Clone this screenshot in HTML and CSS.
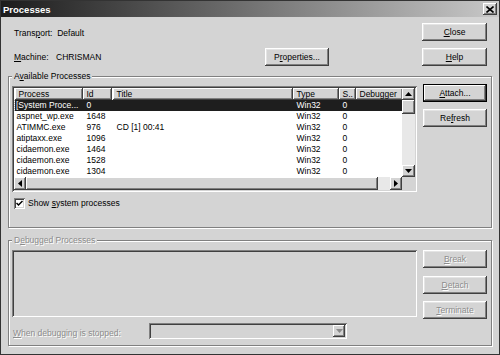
FILE: index.html
```html
<!DOCTYPE html>
<html>
<head>
    <title>Processes</title>
    <link rel="stylesheet" href="styles.css">
</head>
<body>
    <div class="window">
        <div class="titlebar">
            <span class="title">Processes</span>
            <span class="title-close">
                <svg width="8" height="7" viewBox="0 0 8 7"><path d="M0.5 0.5 L7.5 6.5 M7.5 0.5 L0.5 6.5" stroke="#000" stroke-width="1.6"/></svg>
            </span>
        </div>

        <div class="content">
            <div class="top">
                <div class="info">
                    <div class="info-row transport">Trans<u>p</u>ort:&nbsp; Default</div>
                    <div class="info-row machine">
                        <span class="lbl"><u>M</u>achine:</span>
                        <span class="val">CHRISMAN</span>
                        <button class="btn btn-props">P<u>r</u>operties...</button>
                    </div>
                </div>
                <div class="btn-col">
                    <button class="btn"><u>C</u>lose</button>
                    <button class="btn"><u>H</u>elp</button>
                </div>
            </div>

            <fieldset class="group">
                <legend>A<u>v</u>ailable Processes</legend>
                <div class="group-body">
                    <div class="listview">
                        <div class="list-grid">
                            <div class="list-table">
                                <table>
                                    <colgroup>
                                        <col style="width:68px">
                                        <col style="width:30px">
                                        <col style="width:180px">
                                        <col style="width:46px">
                                        <col style="width:17px">
                                        <col style="width:47px">
                                    </colgroup>
                                    <thead>
                                        <tr>
                                            <th>Process</th>
                                            <th>Id</th>
                                            <th>Title</th>
                                            <th>Type</th>
                                            <th>S..</th>
                                            <th>Debugger</th>
                                        </tr>
                                    </thead>
                                    <tbody>
                                        <tr class="selected">
                                            <td class="focus">[System Proce...</td>
                                            <td>0</td><td></td><td>Win32</td><td>0</td><td></td>
                                        </tr>
                                        <tr><td>aspnet_wp.exe</td><td>1648</td><td></td><td>Win32</td><td>0</td><td></td></tr>
                                        <tr><td>ATIMMC.exe</td><td>976</td><td>CD [1] 00:41</td><td>Win32</td><td>0</td><td></td></tr>
                                        <tr><td>atiptaxx.exe</td><td>1096</td><td></td><td>Win32</td><td>0</td><td></td></tr>
                                        <tr><td>cidaemon.exe</td><td>1464</td><td></td><td>Win32</td><td>0</td><td></td></tr>
                                        <tr><td>cidaemon.exe</td><td>1528</td><td></td><td>Win32</td><td>0</td><td></td></tr>
                                        <tr><td>cidaemon.exe</td><td>1304</td><td></td><td>Win32</td><td>0</td><td></td></tr>
                                    </tbody>
                                </table>
                            </div>

                            <div class="vscroll">
                                <span class="sb-btn"><svg width="7" height="4" viewBox="0 0 7 4"><polygon points="3.5,0 7,4 0,4" fill="#000"/></svg></span>
                                <span class="sb-thumb"></span>
                                <span class="sb-track"></span>
                                <span class="sb-btn"><svg width="7" height="4" viewBox="0 0 7 4"><polygon points="0,0 7,0 3.5,4" fill="#000"/></svg></span>
                            </div>

                            <div class="hscroll">
                                <span class="sb-btn"><svg width="4" height="7" viewBox="0 0 4 7"><polygon points="0,3.5 4,0 4,7" fill="#000"/></svg></span>
                                <span class="sb-thumb"></span>
                                <span class="sb-track"></span>
                                <span class="sb-btn"><svg width="4" height="7" viewBox="0 0 4 7"><polygon points="0,0 4,3.5 0,7" fill="#000"/></svg></span>
                            </div>

                            <div class="corner"></div>
                        </div>
                    </div>

                    <div class="btn-col">
                        <button class="btn btn-default"><u>A</u>ttach...</button>
                        <button class="btn">Re<u>f</u>resh</button>
                    </div>
                </div>

                <label class="check">
                    <span class="check-box">
                        <svg width="7" height="7" viewBox="0 0 7 7"><path d="M0.5 3 L2.5 5 L6.5 1" fill="none" stroke="#000" stroke-width="1.5"/></svg>
                    </span>
                    <span>Show <u>s</u>ystem processes</span>
                </label>
            </fieldset>

            <fieldset class="group disabled">
                <legend>D<u>e</u>bugged Processes</legend>
                <div class="group-body debugged">
                    <div class="empty-list"></div>
                    <div class="btn-col">
                        <button class="btn" disabled><u>B</u>reak</button>
                        <button class="btn" disabled><u>D</u>etach</button>
                        <button class="btn" disabled><u>T</u>erminate</button>
                    </div>
                    <div class="stop-row">
                        <span class="stop-lbl"><u>W</u>hen debugging is stopped:</span>
                        <span class="combo">
                            <span class="combo-btn"><svg width="7" height="4" viewBox="0 0 7 4"><polygon points="0,0 7,0 3.5,4" fill="#8a8a8a"/></svg></span>
                        </span>
                    </div>
                </div>
            </fieldset>
        </div>
    </div>
</body>
</html>
```

FILE: styles.css
```css
body {
    margin: 0;
    background: #d4d4d4;
}

.window {
    width: 500px;
    height: 355px;
    box-sizing: border-box;
    border: 1px solid #333;
    background: #d4d4d4;
    font: 8.5px "Liberation Sans", Arial, sans-serif;
    color: #000;
    overflow: hidden;
}

.titlebar {
    height: 16px;
    display: flex;
    align-items: center;
    justify-content: space-between;
    padding: 0 2px 0 2px;
    background: linear-gradient(to right, #1c1c1c, #c8c8c8);
}

.title {
    color: #fff;
    font-weight: bold;
    font-size: 9.5px;
}

.title-close {
    width: 14px;
    height: 12px;
    box-sizing: border-box;
    display: flex;
    align-items: center;
    justify-content: center;
    background: #d4d4d4;
    box-shadow: inset -1px -1px 0 #404040, inset 1px 1px 0 #fff, inset -2px -2px 0 #808080;
}

.content {
    padding: 6px 7px 0 7px;
}

/* top area */
.top {
    display: grid;
    grid-template-columns: 1fr 65px;
    padding-right: 5px;
}

.info {
    display: flex;
    flex-direction: column;
    gap: 7px;
    padding-left: 6px;
}

.info-row {
    height: 18px;
    display: flex;
    align-items: center;
}

.transport {
    padding-top: 2px;
    box-sizing: border-box;
}

.machine .lbl {
    width: 42px;
}

.machine .val {
    width: 209px;
}

.btn-props {
    width: 63px;
    height: 17px;
}

.btn-col {
    display: flex;
    flex-direction: column;
    gap: 7px;
}

.btn {
    box-sizing: border-box;
    width: 64px;
    height: 18px;
    padding: 0;
    border: none;
    background: #d4d4d4;
    font: inherit;
    color: #000;
    box-shadow: inset -1px -1px 0 #404040, inset 1px 1px 0 #fff, inset -2px -2px 0 #808080, inset 2px 2px 0 #e4e4e4;
}

.top .btn-col .btn {
    width: 65px;
}

.btn-default {
    box-shadow: inset 0 0 0 1px #000, inset -2px -2px 0 #404040, inset 2px 2px 0 #fff, inset -3px -3px 0 #808080;
}

.btn:disabled {
    color: #8c8c8c;
    text-shadow: 1px 1px 0 #fff;
}

/* group boxes */
.group {
    margin: 4px 0 0;
    padding: 1px 4px 18px 3px;
    min-width: 0;
    border: 1px solid #808080;
    box-shadow: inset 1px 1px 0 #fff, 1px 1px 0 #fff;
}

.group legend {
    padding: 0 2px;
    line-height: 12px;
    background: #d4d4d4;
}

.group.disabled {
    margin-top: 6px;
    padding-top: 4px;
    padding-bottom: 6px;
}

.group.disabled legend,
.stop-lbl {
    color: #8c8c8c;
    text-shadow: 1px 1px 0 #fff;
}

.group-body {
    display: grid;
    grid-template-columns: 405px 64px;
    column-gap: 6px;
    align-items: start;
}

.group-body > .btn-col {
    margin-top: 1px;
}

.debugged > .btn-col {
    margin-top: 0;
}

/* process list */
.listview {
    margin-top: 3px;
    height: 106px;
    box-sizing: border-box;
    padding: 2px;
    background: #fff;
    box-shadow: inset 1px 1px 0 #808080, inset -1px -1px 0 #fff, inset 2px 2px 0 #404040, inset -2px -2px 0 #d4d4d4;
}

.list-grid {
    height: 100%;
    display: grid;
    grid-template-columns: 1fr 13px;
    grid-template-rows: 1fr 13px;
}

.list-table {
    overflow: hidden;
}

table {
    width: 388px;
    table-layout: fixed;
    border-collapse: collapse;
    white-space: nowrap;
}

th {
    height: 12px;
    padding: 0 0 0 4px;
    text-align: left;
    font-weight: normal;
    overflow: hidden;
    background: #d4d4d4;
    box-shadow: inset -1px -1px 0 #404040, inset 1px 1px 0 #fff, inset -2px -2px 0 #808080;
}

td {
    height: 11px;
    line-height: 11px;
    padding: 0 0 0 4px;
    overflow: hidden;
}

td:first-child {
    padding-left: 2px;
}

.selected td {
    background: #1e1e1e;
    color: #fff;
}

.selected td.focus {
    padding-left: 1px;
    border-left: 1px dotted #bbb;
}

.vscroll,
.hscroll {
    display: flex;
    background: #e8e8e8;
}

.vscroll {
    flex-direction: column;
}

.sb-btn,
.sb-thumb {
    flex: none;
    display: flex;
    align-items: center;
    justify-content: center;
    background: #d4d4d4;
    box-shadow: inset -1px -1px 0 #404040, inset 1px 1px 0 #fff, inset -2px -2px 0 #808080;
}

.vscroll .sb-btn {
    height: 12px;
}

.vscroll .sb-thumb {
    height: 14px;
}

.hscroll .sb-btn {
    width: 12px;
}

.hscroll .sb-thumb {
    width: 352px;
}

.sb-track {
    flex: 1;
}

.corner {
    background: #d4d4d4;
}

/* checkbox */
.check {
    margin-top: 5px;
    margin-left: 2px;
    height: 12px;
    display: flex;
    align-items: center;
    gap: 3px;
}

.check-box {
    width: 11px;
    height: 11px;
    box-sizing: border-box;
    display: flex;
    align-items: center;
    justify-content: center;
    background: #fff;
    box-shadow: inset 1px 1px 0 #808080, inset -1px -1px 0 #fff, inset 2px 2px 0 #404040, inset -2px -2px 0 #d4d4d4;
}

/* debugged processes */
.empty-list {
    height: 67px;
    box-shadow: inset 1px 1px 0 #808080, inset -1px -1px 0 #fff, inset 2px 2px 0 #404040, inset -2px -2px 0 #d4d4d4;
}

.debugged .btn-col .btn:nth-child(2) {
    margin-top: 1px;
}

.stop-row {
    grid-column: 1 / -1;
    margin-top: 4px;
    display: flex;
    align-items: center;
}

.stop-lbl {
    width: 137px;
    padding-left: 1px;
    box-sizing: border-box;
    margin-top: 3px;
}

.combo {
    width: 198px;
    height: 16px;
    box-sizing: border-box;
    padding: 2px;
    display: flex;
    justify-content: flex-end;
    box-shadow: inset 1px 1px 0 #808080, inset -1px -1px 0 #fff, inset 2px 2px 0 #404040, inset -2px -2px 0 #d4d4d4;
}

.combo-btn {
    width: 12px;
    display: flex;
    align-items: center;
    justify-content: center;
    box-shadow: inset -1px -1px 0 #404040, inset 1px 1px 0 #fff, inset -2px -2px 0 #808080;
}
```
